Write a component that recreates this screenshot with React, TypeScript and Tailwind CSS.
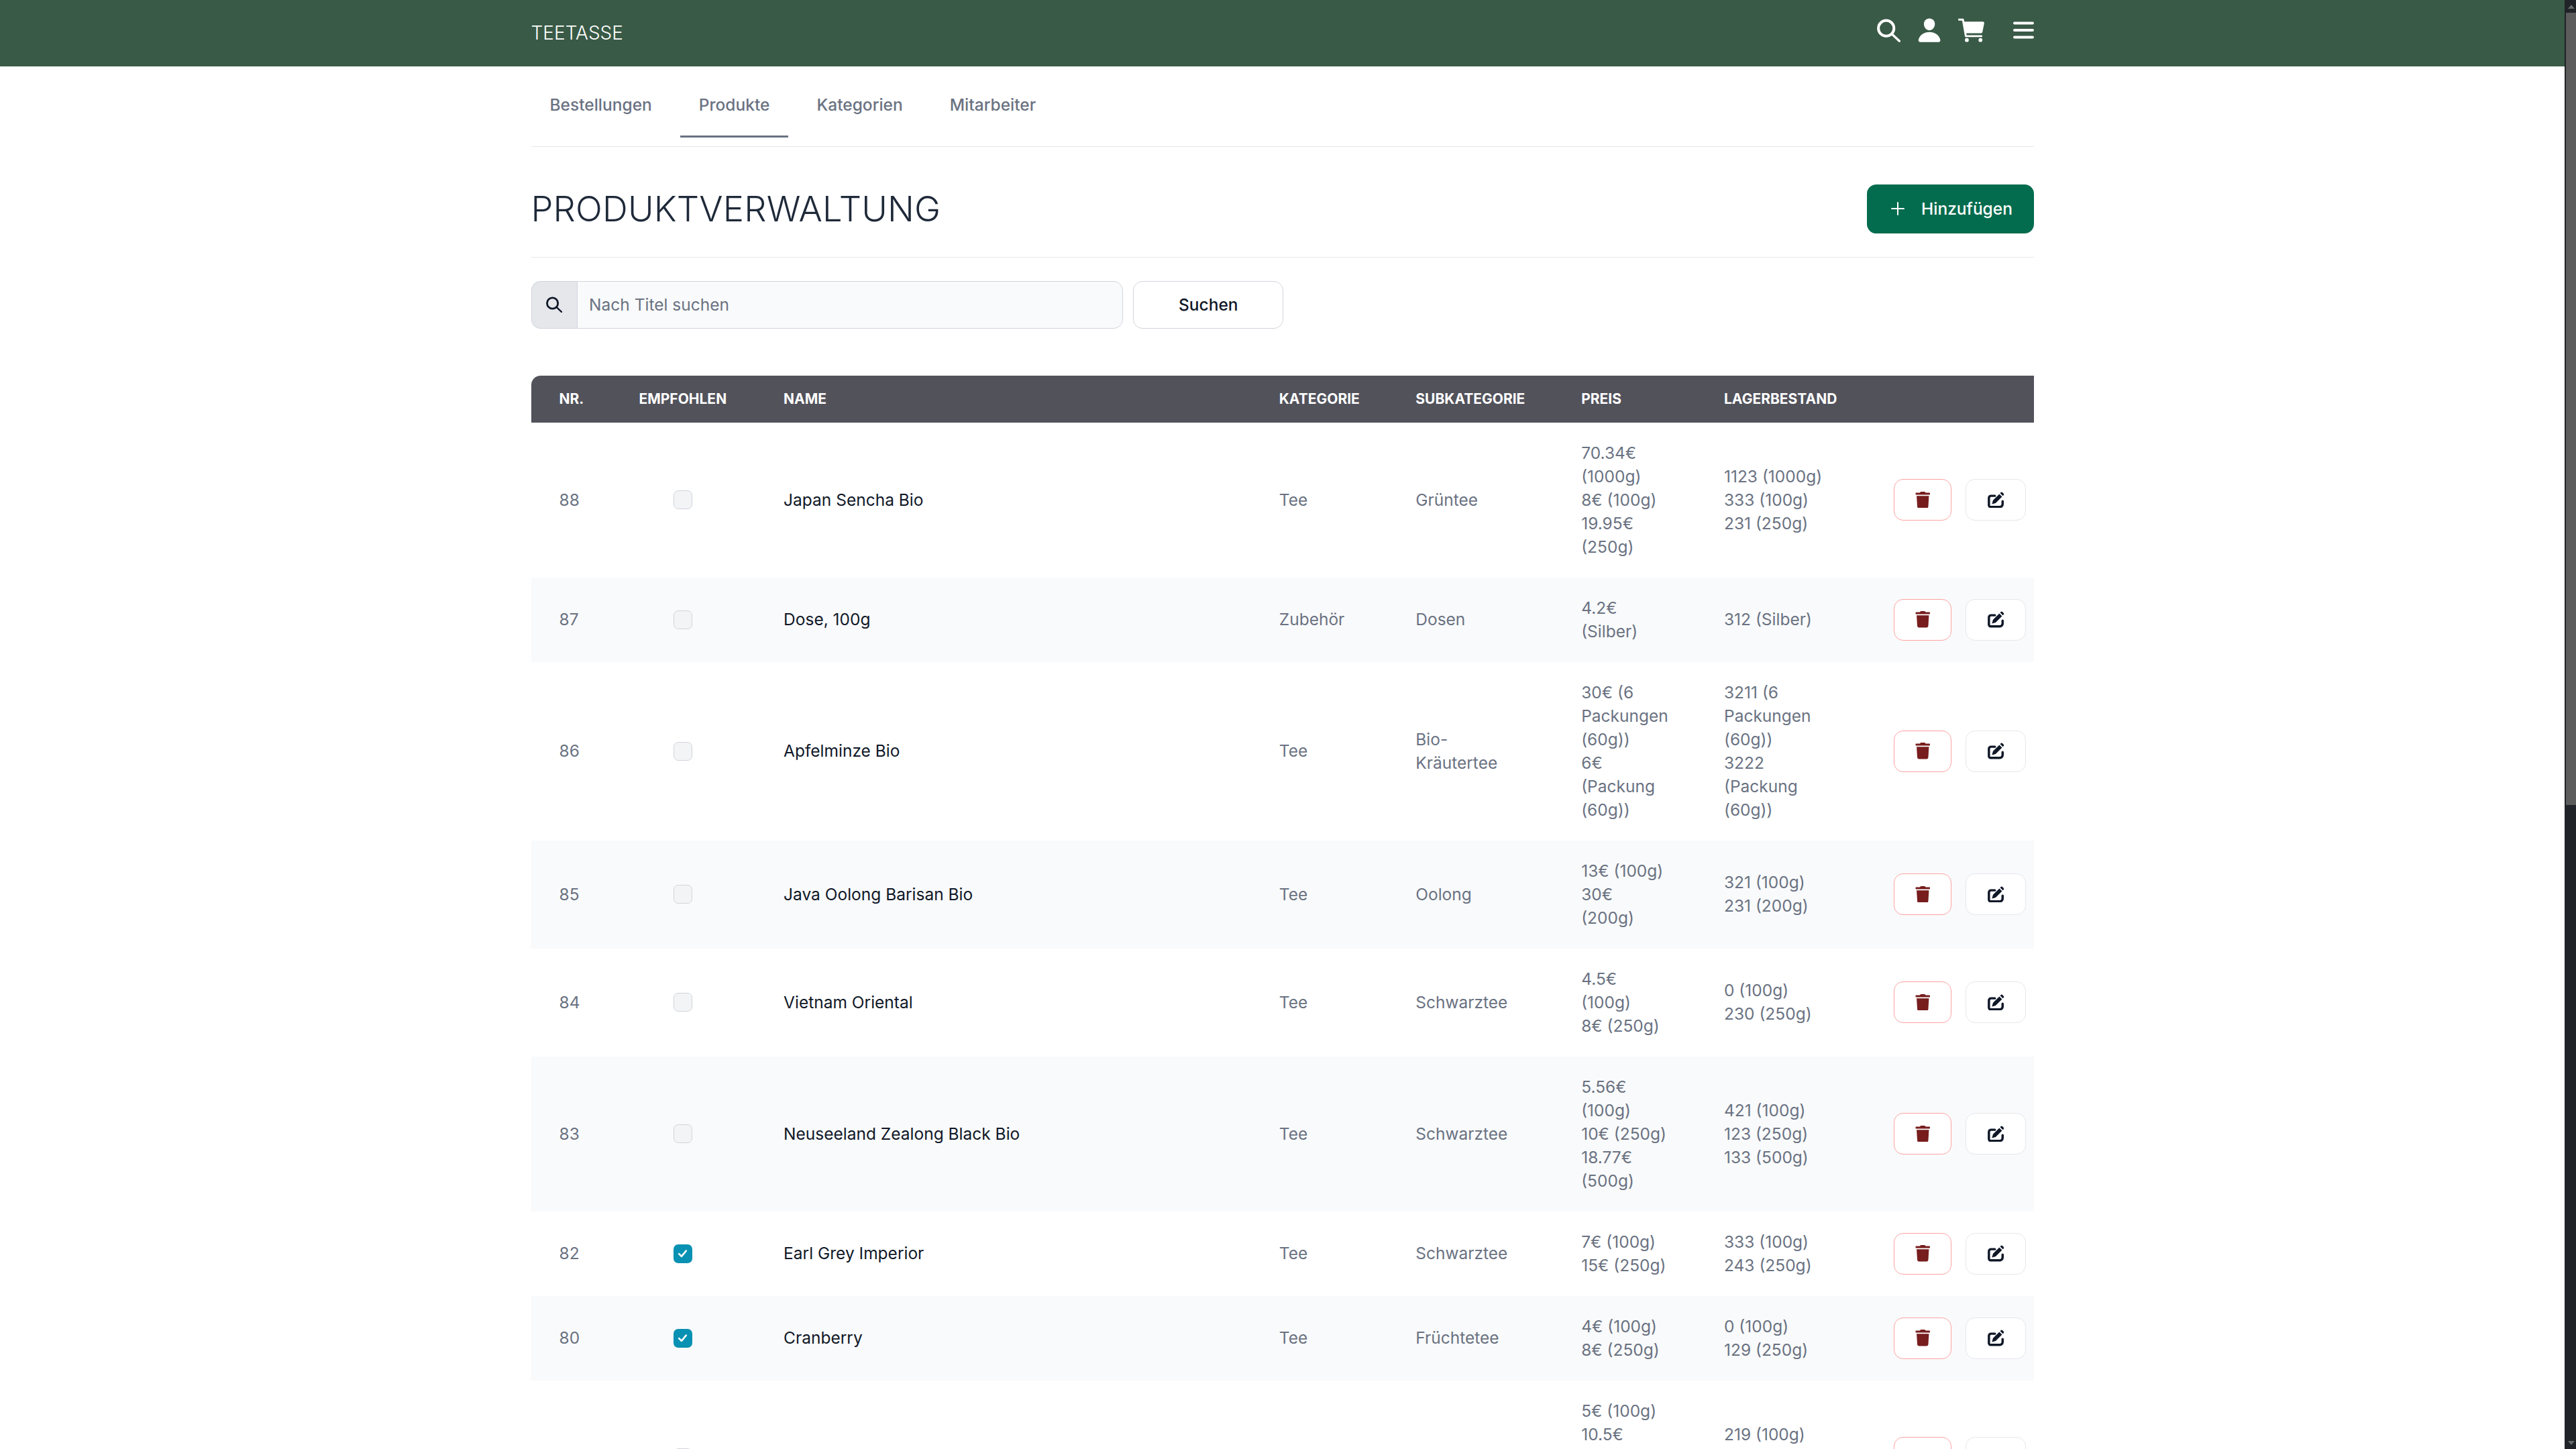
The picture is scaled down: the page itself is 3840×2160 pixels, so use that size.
import React from 'react';
import { FaTrash } from 'react-icons/fa';
import { IoAdd, IoCart, IoPerson } from 'react-icons/io5';

// Types
interface Product {
  nr: string;
  recommended: boolean;
  name: string;
  category: string;
  subcategory: string;
  prices: string[];
  stock: string[];
}

const products: Product[] = [
  { nr: '88', recommended: false, name: 'Japan Sencha Bio', category: 'Tee', subcategory: 'Grüntee', prices: ['70.34€', '(1000g)', '8€ (100g)', '19.95€', '(250g)'], stock: ['1123 (1000g)', '333 (100g)', '231 (250g)'] },
  { nr: '87', recommended: false, name: 'Dose, 100g', category: 'Zubehör', subcategory: 'Dosen', prices: ['4.2€', '(Silber)'], stock: ['312 (Silber)'] },
  { nr: '86', recommended: false, name: 'Apfelminze Bio', category: 'Tee', subcategory: 'Bio-\nKräutertee', prices: ['30€ (6', 'Packungen', '(60g))', '6€', '(Packung', '(60g))'], stock: ['3211 (6', 'Packungen', '(60g))', '3222', '(Packung', '(60g))'] },
  { nr: '85', recommended: false, name: 'Java Oolong Barisan Bio', category: 'Tee', subcategory: 'Oolong', prices: ['13€ (100g)', '30€', '(200g)'], stock: ['321 (100g)', '231 (200g)'] },
  { nr: '84', recommended: false, name: 'Vietnam Oriental', category: 'Tee', subcategory: 'Schwarztee', prices: ['4.5€', '(100g)', '8€ (250g)'], stock: ['0 (100g)', '230 (250g)'] },
  { nr: '83', recommended: false, name: 'Neuseeland Zealong Black Bio', category: 'Tee', subcategory: 'Schwarztee', prices: ['5.56€', '(100g)', '10€ (250g)', '18.77€', '(500g)'], stock: ['421 (100g)', '123 (250g)', '133 (500g)'] },
  { nr: '82', recommended: true, name: 'Earl Grey Imperior', category: 'Tee', subcategory: 'Schwarztee', prices: ['7€ (100g)', '15€ (250g)'], stock: ['333 (100g)', '243 (250g)'] },
  { nr: '80', recommended: true, name: 'Cranberry', category: 'Tee', subcategory: 'Früchtetee', prices: ['4€ (100g)', '8€ (250g)'], stock: ['0 (100g)', '129 (250g)'] },
  // cut off by the bottom of the window
  { nr: '', recommended: false, name: '', category: '', subcategory: '', prices: ['5€ (100g)', '10.5€', '(250g)', '20€', '(500g)'], stock: ['219 (100g)', '120 (250g)', '100 (500g)'] },
];

const tabs = ['Bestellungen', 'Produkte', 'Kategorien', 'Mitarbeiter'];

// Thin ring with a thinner handle, none of the icon sets has this one
const SearchIcon: React.FC<{ className?: string }> = ({ className }) => (
  <svg viewBox="0 0 35 35" className={className} fill="none" stroke="currentColor" strokeLinecap="round">
    <circle cx="13.7" cy="14.2" r="11.6" strokeWidth="4" />
    <path d="M23 23.5L33.4 33.2" strokeWidth="3.4" />
  </svg>
);

const MenuIcon = () => (
  <svg viewBox="0 0 31 26" className="w-[17.7px] h-[14.9px]" fill="none" stroke="currentColor" strokeWidth="4" strokeLinecap="round">
    <path d="M2 2.5h27M2 13h27M2 23.5h27" />
  </svg>
);

// Open square with a solid pen on top of it
const EditIcon = () => (
  <svg viewBox="0 0 24 24" className="w-3.5 h-3.5 text-gray-900" fill="none">
    <path d="M10.5 6H5a3.2 3.2 0 0 0-3.2 3.2v10.6A2.4 2.4 0 0 0 4.2 22.2h13.6a4 4 0 0 0 4-4V14" stroke="currentColor" strokeWidth="3.4" strokeLinecap="round" />
    <path d="M6.2 18l1.6-5.4 9.2-9.2 4 4-9.4 9.2zM18.2 2.2l1-1.1a1.6 1.6 0 0 1 2.3 0l1.7 1.7a1.6 1.6 0 0 1 0 2.3l-1 1.1z" fill="currentColor" />
  </svg>
);

const Navbar = () => (
  <nav className="bg-[#395a46] h-[56.6px]">
    <div className="max-w-[1280px] mx-auto flex items-center justify-between pt-[7.5px] pb-[8.6px] h-full text-white">
      <span className="text-base font-light">TEETASSE</span>
      <div className="flex items-center mb-[3.5px]">
        <SearchIcon className="w-5 h-5" />
        <IoPerson className="w-[23px] h-[23px] ml-[13px]" />
        <IoCart className="w-[26.5px] h-[26.5px] ml-[11.5px]" />
        <span className="ml-[21.6px]">
          <MenuIcon />
        </span>
      </div>
    </div>
  </nav>
);

const Tabs = () => (
  <div className="pt-[7px] border-b border-gray-200">
    <ul className="flex text-sm font-medium text-gray-500 pb-[7px]">
      {tabs.map((tab) => (
        <li key={tab} className="mr-2">
          <a className={`inline-block p-4 border-b-2 ${tab === 'Produkte' ? 'border-gray-500' : 'border-transparent'}`}>
            {tab}
          </a>
        </li>
      ))}
    </ul>
  </div>
);

const ProductRow: React.FC<{ product: Product; index: number }> = ({ product, index }) => (
  <tr className={`text-sm text-gray-500 ${index % 2 === 1 ? 'bg-gray-50' : 'bg-white'}`}>
    <td className="pl-6 py-4">{product.nr}</td>
    <td className="py-4">
      <div className="flex justify-center">
        {product.recommended ? (
          <span className="flex items-center justify-center w-4 h-4 rounded bg-[#0891b2]">
            <svg viewBox="0 0 16 16" className="w-3 h-3" fill="none" stroke="white" strokeWidth="2" strokeLinecap="round" strokeLinejoin="round">
              <path d="M4 8.5l2.8 2.8L12 5" />
            </svg>
          </span>
        ) : (
          <span className="w-4 h-4 rounded border border-gray-300 bg-gray-100" />
        )}
      </div>
    </td>
    <td className="pl-6 py-4 font-normal text-gray-900">{product.name}</td>
    <td className="pl-6 py-4">{product.category}</td>
    <td className="pl-6 py-4 whitespace-pre-line">{product.subcategory}</td>
    <td className="pl-6 py-4">
      {product.prices.map((line, i) => (
        <div key={i}>{line}</div>
      ))}
    </td>
    <td className="pl-6 py-4">
      {product.stock.map((line, i) => (
        <div key={i}>{line}</div>
      ))}
    </td>
    <td className="py-4">
      <div className="flex items-center">
        <button className="flex items-center justify-center w-[49px] h-[35.4px] bg-white border border-red-300 rounded-lg">
          <FaTrash className="w-3.5 h-3.5 text-[#771d1d]" />
        </button>
        <button className="flex items-center justify-center w-[51.5px] h-[35.4px] ml-3 bg-white border border-gray-200 rounded-lg">
          <EditIcon />
        </button>
      </div>
    </td>
  </tr>
);

// Fake browser scrollbar, the page itself is cut at the window height
const Scrollbar = () => (
  <div className="w-[17px] h-full shrink-0 flex flex-col bg-[#202428]">
    <div className="h-[19px] flex items-center justify-center pl-[2px]">
      <div className="w-0 h-0 border-x-[5px] border-x-transparent border-b-[6px] border-b-[#6a6a6a]" />
    </div>
    <div className="h-[1181px] ml-[2px] bg-[#5c5c5c]" />
    <div className="flex-1" />
    <div className="h-[19px] flex items-center justify-center pl-[2px]">
      <div className="w-0 h-0 border-x-[5px] border-x-transparent border-t-[6px] border-t-[#6a6a6a]" />
    </div>
  </div>
);

export default function App() {
  return (
    <div className="flex h-[2160px] w-[3840px] overflow-hidden bg-white">
      <div className="flex-1 min-w-0 [zoom:1.75] text-gray-900 font-['Inter',sans-serif]">
        <Navbar />
        <main className="max-w-[1280px] mx-auto">
          <Tabs />

          {/* Title */}
          <div className="flex items-center justify-between pt-[32.5px] pb-5 border-b border-gray-200">
            <h1 className="text-3xl font-light tracking-[0.08px] text-gray-800">PRODUKTVERWALTUNG</h1>
            <button className="flex items-center h-[41.2px] w-[142px] pl-[16.9px] rounded-lg bg-[#046c4e] text-white text-sm font-medium">
              <IoAdd className="w-[18.3px] h-[18.3px] mr-[11.1px]" />
              Hinzufügen
            </button>
          </div>

          {/* Search */}
          <div className="flex mt-5 mb-10 h-[40.6px]">
            <div className="flex items-center justify-center w-[38.9px] bg-gray-200 border border-r-0 border-gray-300 rounded-l-lg">
              <SearchIcon className="w-3.5 h-3.5 text-gray-900" />
            </div>
            <input
              readOnly
              placeholder="Nach Titel suchen"
              className="w-[465.5px] px-2.5 bg-gray-50 border border-gray-300 rounded-r-lg text-sm text-gray-900 placeholder:text-gray-500 outline-none"
            />
            <button className="w-[128px] ml-[8.6px] bg-white border border-gray-300 rounded-lg text-sm font-medium text-gray-900">
              Suchen
            </button>
          </div>

          <table className="w-full table-fixed text-left">
            <thead className="bg-[#52525b] text-white text-xs font-bold uppercase">
              <tr className="h-10">
                <th className="w-[67.4px] pl-6 rounded-tl-lg">Nr.</th>
                <th className="w-[123.8px] text-center">Empfohlen</th>
                <th className="w-[422.1px] pl-6">Name</th>
                <th className="w-[116.3px] pl-6">Kategorie</th>
                <th className="w-[141.1px] pl-6">Subkategorie</th>
                <th className="w-[121.6px] pl-6">Preis</th>
                <th className="w-[168.6px] pl-6">Lagerbestand</th>
                <th />
              </tr>
            </thead>
            <tbody>
              {products.map((product, index) => (
                <ProductRow key={index} product={product} index={index} />
              ))}
            </tbody>
          </table>
        </main>
      </div>
      <Scrollbar />
    </div>
  );
}
